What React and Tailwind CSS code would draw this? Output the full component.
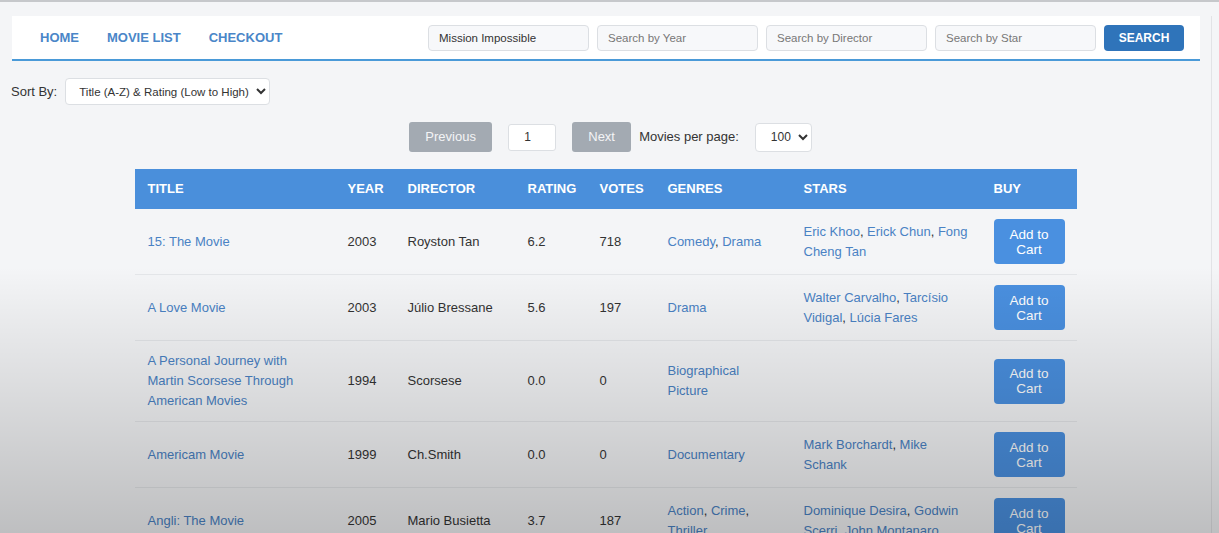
import React from 'react';

const movies = [
    {
        title: '15: The Movie',
        year: 2003,
        director: 'Royston Tan',
        rating: '6.2',
        votes: 718,
        genres: ['Comedy', 'Drama'],
        stars: ['Eric Khoo', 'Erick Chun', 'Fong Cheng Tan'],
    },
    {
        title: 'A Love Movie',
        year: 2003,
        director: 'Júlio Bressane',
        rating: '5.6',
        votes: 197,
        genres: ['Drama'],
        stars: ['Walter Carvalho', 'Tarcísio Vidigal', 'Lúcia Fares'],
    },
    {
        title: 'A Personal Journey with Martin Scorsese Through American Movies',
        year: 1994,
        director: 'Scorsese',
        rating: '0.0',
        votes: 0,
        genres: ['Biographical Picture'],
        stars: [],
    },
    {
        title: 'Americam Movie',
        year: 1999,
        director: 'Ch.Smith',
        rating: '0.0',
        votes: 0,
        genres: ['Documentary'],
        stars: ['Mark Borchardt', 'Mike Schank'],
    },
    {
        title: 'Angli: The Movie',
        year: 2005,
        director: 'Mario Busietta',
        rating: '3.7',
        votes: 187,
        genres: ['Action', 'Crime', 'Thriller'],
        stars: ['Dominique Desira', 'Godwin Scerri', 'John Montanaro'],
    },
];

const LinkList = ({ items }) => (
    <span>
        {items.map((it, i) => (
            <React.Fragment key={it}>
                <a href="#" className="text-[#4a82c4]">{it}</a>
                {i < items.length - 1 && <span className="text-[#333]">, </span>}
            </React.Fragment>
        ))}
    </span>
);

const App = () => {
    const inputCls =
        'w-[161px] h-[26px] rounded-[4px] border border-[#dcdfe3] bg-[#f7f8fa] px-[10px] text-[11.5px] text-[#333] placeholder-[#777] outline-none';

    return (
        <div
            className="relative min-h-[533px] w-full overflow-hidden bg-[#f4f5f7] border-t-2 border-[#c6c8cb] text-[13px] text-[#333]"
            style={{ fontFamily: '"Liberation Sans", Arial, sans-serif' }}
        >
            <div className="w-[1212px] border-r border-[#e2e3e6] min-h-[531px]">
                {/* Navbar */}
                <div className="ml-3 mr-[11px] mt-[14px] flex h-[45px] items-center bg-white border-b-2 border-[#4a9ad8] pl-[28px] pr-[16px]">
                    <a href="#" className="font-bold text-[#4a86c8]">HOME</a>
                    <a href="#" className="ml-[28px] font-bold text-[#4a86c8]">MOVIE LIST</a>
                    <a href="#" className="ml-[28px] font-bold text-[#4a86c8]">CHECKOUT</a>
                    <div className="ml-auto mt-[1px] flex items-center gap-[8px]">
                        <input className={inputCls} defaultValue="Mission Impossible" />
                        <input className={inputCls} placeholder="Search by Year" />
                        <input className={inputCls} placeholder="Search by Director" />
                        <input className={inputCls} placeholder="Search by Star" />
                        <button className="h-[26px] w-[80px] rounded-[4px] bg-[#2f74ba] text-[12px] font-bold text-white">
                            SEARCH
                        </button>
                    </div>
                </div>

                {/* Sort */}
                <div className="mt-[17px] flex items-center pl-[11px]">
                    <span>Sort By:</span>
                    <select className="ml-[8px] h-[27px] w-[205px] rounded-[4px] border border-[#dcdfe3] bg-white pl-[9px] text-[11.5px] text-[#333]">
                        <option>Title (A-Z) &amp; Rating (Low to High)</option>
                    </select>
                </div>

                {/* Pagination */}
                <div className="mt-[17px] flex items-center justify-center pl-[10px]">
                    <button className="h-[30px] w-[83px] rounded-[3px] bg-[#a3aab2] text-[13px] text-[#f3f4f6]">
                        Previous
                    </button>
                    <input
                        className="ml-[16px] h-[27px] w-[48px] rounded-[3px] border border-[#dcdfe3] bg-white px-[15px] text-[12px] outline-none"
                        defaultValue="1"
                    />
                    <button className="ml-[16px] h-[30px] w-[59px] rounded-[3px] bg-[#a3aab2] text-[13px] text-[#f3f4f6]">
                        Next
                    </button>
                    <span className="ml-[8px]">Movies per page:</span>
                    <select className="ml-[16px] h-[29px] w-[57px] rounded-[4px] border border-[#dcdfe3] bg-white pl-[11px] text-[12px] text-[#333]">
                        <option>100</option>
                    </select>
                </div>

                {/* Table */}
                <table className="mx-auto mt-[17px] w-[942px] table-fixed border-collapse">
                    <colgroup>
                        <col className="w-[200px]" />
                        <col className="w-[60px]" />
                        <col className="w-[120px]" />
                        <col className="w-[72px]" />
                        <col className="w-[68px]" />
                        <col className="w-[136px]" />
                        <col className="w-[190px]" />
                        <col className="w-[96px]" />
                    </colgroup>
                    <thead>
                        <tr className="h-[40px] bg-[#4a8fdb] text-left text-white">
                            {['TITLE', 'YEAR', 'DIRECTOR', 'RATING', 'VOTES', 'GENRES', 'STARS', 'BUY'].map(h => (
                                <th key={h} className="px-[13px] font-bold">{h}</th>
                            ))}
                        </tr>
                    </thead>
                    <tbody>
                        {movies.map(m => (
                            <tr key={m.title} className="border-b border-[#e4e6e9] leading-[20px]">
                                <td className="px-[13px] py-[10px]">
                                    <a href="#" className="text-[#4a82c4]">{m.title}</a>
                                </td>
                                <td className="px-[13px] py-[10px]">{m.year}</td>
                                <td className="px-[13px] py-[10px]">{m.director}</td>
                                <td className="px-[13px] py-[10px]">{m.rating}</td>
                                <td className="px-[13px] py-[10px]">{m.votes}</td>
                                <td className="px-[13px] py-[10px]"><LinkList items={m.genres} /></td>
                                <td className="pl-[13px] pr-[8px] py-[10px]"><LinkList items={m.stars} /></td>
                                <td className="px-[13px] py-[10px]">
                                    <button className="block h-[45px] w-[71px] rounded-[4px] bg-[#4a90e0] text-[13.5px] leading-[15px] text-white">
                                        Add to<br />Cart
                                    </button>
                                </td>
                            </tr>
                        ))}
                    </tbody>
                </table>
            </div>

            {/* video shading over the lower half */}
            <div className="pointer-events-none absolute inset-0 bg-[linear-gradient(to_bottom,rgba(0,0,0,0)_48%,rgba(0,0,0,0.24)_100%)]" />
        </div>
    );
};

export default App;
